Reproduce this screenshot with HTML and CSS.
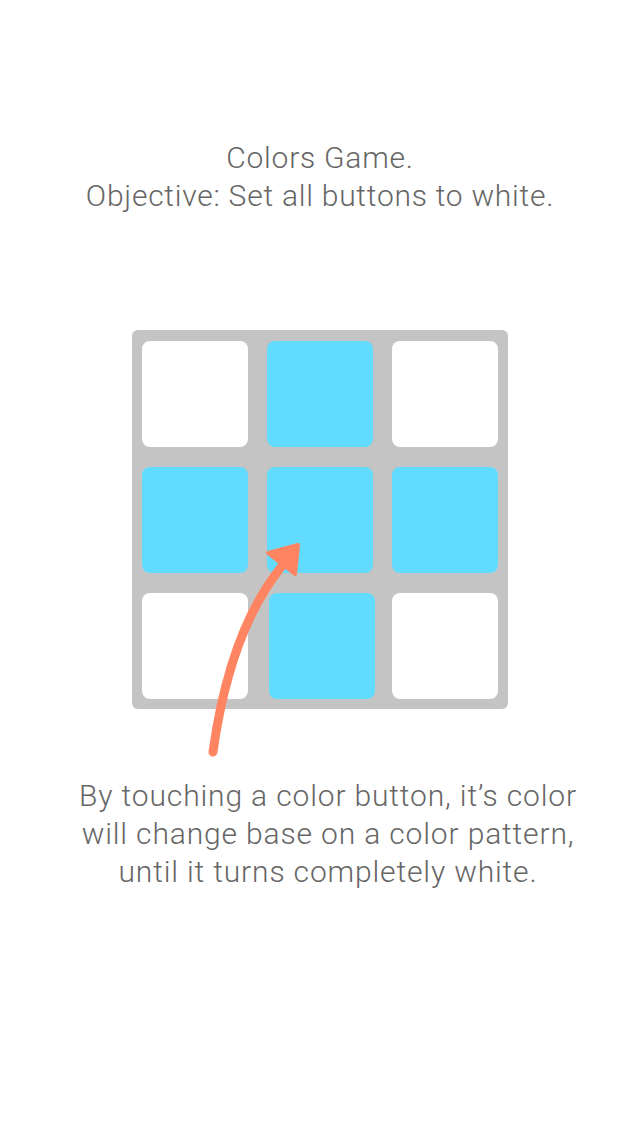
FILE: index.html
```html
<!DOCTYPE html>
<html>
<head>
<meta charset="utf-8">
<link rel="stylesheet" href="styles.css">
</head>
<body>
<main class="screen">
  <h1 class="title">Colors Game.<br>Objective: Set all buttons to white.</h1>
  <div class="board-wrap">
    <div class="board">
      <div class="tile white"></div>
      <div class="tile blue"></div>
      <div class="tile white"></div>
      <div class="tile blue"></div>
      <div class="tile blue"></div>
      <div class="tile blue"></div>
      <div class="tile white"></div>
      <div class="tile blue shift"></div>
      <div class="tile white"></div>
    </div>
    <svg class="arrow" width="640" height="460" viewBox="0 330 640 460" xmlns="http://www.w3.org/2000/svg">
      <path d="M213 752 Q230 630 282 566" fill="none" stroke="#FF8562" stroke-width="9" stroke-linecap="round"/>
      <polygon points="268,553 298,545 295,574" fill="#FF8562" stroke="#FF8562" stroke-width="4" stroke-linejoin="round"/>
    </svg>
  </div>
  <p class="hint">By touching a color button, it’s color<br>will change base on a color pattern,<br>until it turns completely white.</p>
</main>
</body>
</html>
```
FILE: styles.css
```css
html, body {
  margin: 0;
  padding: 0;
  background: #ffffff;
}
.screen {
  width: 640px;
  height: 1136px;
  display: flex;
  flex-direction: column;
  align-items: center;
  font-family: Roboto, "Liberation Sans", sans-serif;
  font-weight: 300;
  color: #666666;
}
.title {
  margin: 139px 0 0 0;
  font-size: 30px;
  font-weight: 300;
  letter-spacing: 0.75px;
  line-height: 38px;
  text-align: center;
}
.board-wrap {
  position: relative;
  margin-top: 115px;
  width: 640px;
  display: flex;
  justify-content: center;
}
.board {
  width: 376px;
  box-sizing: border-box;
  padding: 11px 10px 10px 10px;
  background: #C4C4C4;
  border-radius: 6px;
  display: grid;
  grid-template-columns: repeat(3, 106px);
  grid-auto-rows: 106px;
  column-gap: 19px;
  row-gap: 20px;
}
.tile {
  border-radius: 8px;
}
.tile.white { background: #ffffff; }
.tile.blue { background: #61DCFF; }
.tile.shift { transform: translateX(2px); }
.arrow {
  position: absolute;
  left: 0;
  top: 0;
}
.hint {
  margin: 68px 0 0 0;
  padding-left: 16px;
  font-size: 30px;
  letter-spacing: 0.85px;
  line-height: 38px;
  text-align: center;
}
```
